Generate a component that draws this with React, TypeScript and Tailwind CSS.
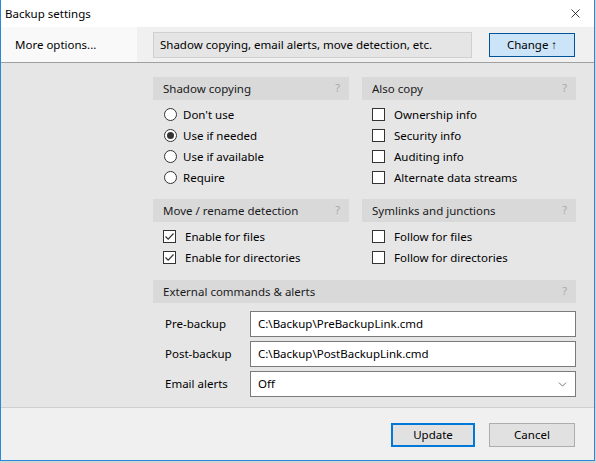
import { ChevronDown, X } from "lucide-react";

const font = { fontFamily: '"Segoe UI", "Noto Sans", "Open Sans", sans-serif' };

function SectionHeader({ title }: { title: string }) {
    return (
        <div className="flex items-center justify-between h-[23px] bg-[#d9d9d9] pl-[10px] pr-[9px]">
            <span className="text-[#1a1a1a]">{title}</span>
            <span className="text-[#a8a8a8] text-[11px]">?</span>
        </div>
    );
}

function Radio({ label, checked }: { label: string; checked?: boolean }) {
    return (
        <div className="flex items-center h-[21px] pl-[11px]">
            <span className="w-[13px] h-[13px] rounded-full border border-[#333] bg-white flex items-center justify-center mr-[6px]">
                {checked && <span className="w-[7px] h-[7px] rounded-full bg-[#333]" />}
            </span>
            <span>{label}</span>
        </div>
    );
}

function Check({ label, checked }: { label: string; checked?: boolean }) {
    return (
        <div className="flex items-center h-[21px] pl-[10px]">
            <span className="w-[13px] h-[13px] border border-[#333] bg-white flex items-center justify-center mr-[9px]">
                {checked && (
                    <svg width="11" height="11" viewBox="0 0 11 11">
                        <path d="M1.5 5.5 L4.2 8.2 L9.5 2.5" fill="none" stroke="#333" strokeWidth="1.2" />
                    </svg>
                )}
            </span>
            <span>{label}</span>
        </div>
    );
}

function Field({ label, value, select }: { label: string; value: string; select?: boolean }) {
    return (
        <div className="flex items-center h-[26px]">
            <span className="w-[97px] pl-[12px]">{label}</span>
            <div className="flex-1 h-full bg-white border border-[#7a7a7a] flex items-center justify-between pl-[7px] pr-[6px]">
                <span>{value}</span>
                {select && <ChevronDown className="w-[13px] h-[13px] text-[#555]" strokeWidth={1.5} />}
            </div>
        </div>
    );
}

export default function App() {
    return (
        <div className="w-[596px] h-[463px] bg-[#d4d4d4] text-[11.5px] text-black" style={font}>
            <div className="w-[595px] h-[461px] flex flex-col border-l border-r border-b border-[#2b88d8] bg-white">
                {/* Title bar */}
                <div className="flex items-center justify-between h-[27px] pl-[4px] pr-[11px] bg-white">
                    <span>Backup settings</span>
                    <X className="w-[15px] h-[15px] text-[#111]" strokeWidth={1.3} />
                </div>

                {/* Options bar */}
                <div className="flex h-[36px] bg-[#f0f0f0] border-b border-[#a0a0a0]">
                    <div className="w-[136px] bg-[#f9f9f9] flex items-center pl-[14px]">More options...</div>
                    <div className="flex-1 flex items-center pl-[16px] pr-[19px]">
                        <div className="w-[319px] h-[26px] bg-[#e5e5e5] border border-[#d0d0d0] flex items-center pl-[6px]">
                            Shadow copying, email alerts, move detection, etc.
                        </div>
                        <div className="ml-auto w-[86px] h-[24px] bg-[#cce4f7] border border-[#005499] flex items-center justify-center">
                            Change ↑
                        </div>
                    </div>
                </div>

                {/* Main */}
                <div className="flex-1 bg-[#e6e6e6] border-b border-[#d0d0d0] pl-[152px] pr-[18px] pt-[14px]">
                    <div className="grid grid-cols-[196px_214px] gap-x-[13px]">
                        <div>
                            <SectionHeader title="Shadow copying" />
                            <div className="pt-[4px] pb-[11px]">
                                <Radio label="Don't use" />
                                <Radio label="Use if needed" checked />
                                <Radio label="Use if available" />
                                <Radio label="Require" />
                            </div>
                        </div>
                        <div>
                            <SectionHeader title="Also copy" />
                            <div className="pt-[4px] pb-[11px]">
                                <Check label="Ownership info" />
                                <Check label="Security info" />
                                <Check label="Auditing info" />
                                <Check label="Alternate data streams" />
                            </div>
                        </div>
                        <div>
                            <SectionHeader title="Move / rename detection" />
                            <div className="pt-[4px] pb-[12px]">
                                <Check label="Enable for files" checked />
                                <Check label="Enable for directories" checked />
                            </div>
                        </div>
                        <div>
                            <SectionHeader title="Symlinks and junctions" />
                            <div className="pt-[4px] pb-[12px]">
                                <Check label="Follow for files" />
                                <Check label="Follow for directories" />
                            </div>
                        </div>
                    </div>
                    <SectionHeader title="External commands & alerts" />
                    <div className="flex flex-col gap-[4px] pt-[8px]">
                        <Field label="Pre-backup" value="C:\Backup\PreBackupLink.cmd" />
                        <Field label="Post-backup" value="C:\Backup\PostBackupLink.cmd" />
                        <Field label="Email alerts" value="Off" select />
                    </div>
                </div>

                {/* Footer */}
                <div className="h-[52px] bg-[#f0f0f0] flex items-center justify-end gap-[14px] pr-[19px] pt-[2px]">
                    <div className="w-[84px] h-[24px] bg-[#e1e1e1] border-2 border-[#0078d7] flex items-center justify-center">
                        Update
                    </div>
                    <div className="w-[86px] h-[24px] bg-[#e1e1e1] border border-[#adadad] flex items-center justify-center">
                        Cancel
                    </div>
                </div>
            </div>
        </div>
    );
}
